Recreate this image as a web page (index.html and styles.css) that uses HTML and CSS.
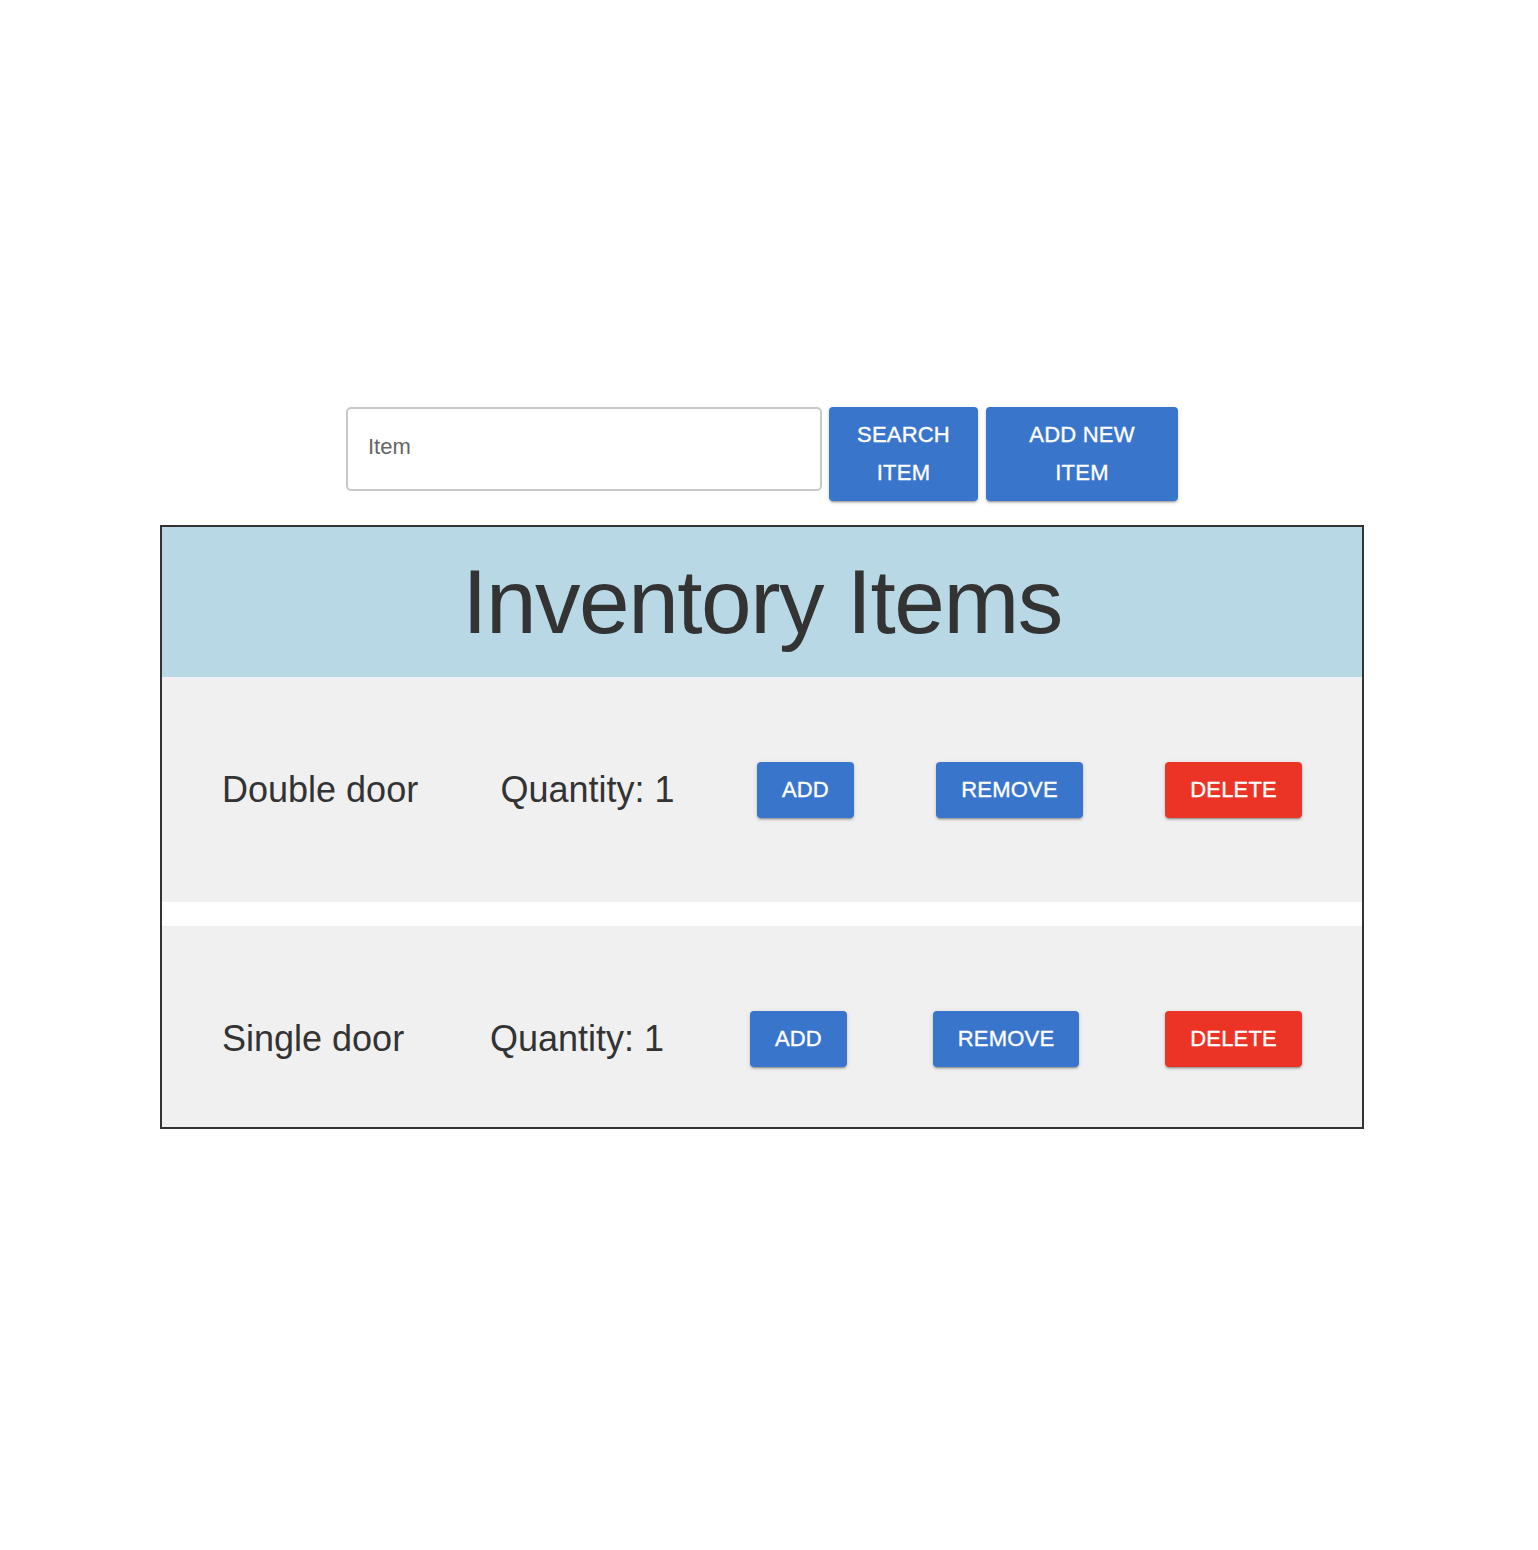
FILE: index.html
```html
<!DOCTYPE html>
<html>
<head>
<meta charset="utf-8">
<link rel="stylesheet" href="styles.css">
<title>Inventory</title>
</head>
<body>
<div class="page">
  <div class="search-row">
    <input class="search-input" type="text" placeholder="Item">
    <button class="btn btn-blue btn-search">SEARCH<br>ITEM</button>
    <button class="btn btn-blue btn-addnew">ADD NEW<br>ITEM</button>
  </div>
  <div class="inventory">
    <div class="inv-header">Inventory Items</div>
    <div class="inv-row">
      <span class="inv-name">Double door</span>
      <span class="inv-qty">Quantity: 1</span>
      <button class="btn btn-blue btn-small">ADD</button>
      <button class="btn btn-blue btn-small">REMOVE</button>
      <button class="btn btn-red btn-small">DELETE</button>
    </div>
    <div class="inv-row">
      <span class="inv-name">Single door</span>
      <span class="inv-qty">Quantity: 1</span>
      <button class="btn btn-blue btn-small">ADD</button>
      <button class="btn btn-blue btn-small">REMOVE</button>
      <button class="btn btn-red btn-small">DELETE</button>
    </div>
  </div>
</div>
</body>
</html>
```
FILE: styles.css
```css
html, body {
  margin: 0;
  padding: 0;
  background: #fff;
}
body {
  font-family: "Liberation Sans", Arial, Helvetica, sans-serif;
  color: #333;
}
.page {
  padding: 407px 0 0 0;
}
.search-row {
  display: flex;
  align-items: flex-start;
  margin-left: 346px;
  margin-bottom: 24px;
}
.search-input {
  box-sizing: border-box;
  width: 476px;
  height: 84px;
  border: 2px solid #c8c8c8;
  border-radius: 5px;
  padding: 0 20px 4px 20px;
  font-family: "Liberation Sans", Arial, sans-serif;
  font-size: 22px;
  color: #333;
  background: #fff;
  outline: none;
  margin-right: 7px;
}
.search-input::placeholder {
  color: #666;
}
.btn {
  border: none;
  border-radius: 4px;
  color: #fff;
  font-family: "Liberation Sans", Arial, sans-serif;
  font-size: 22px;
  letter-spacing: 0.2px;
  -webkit-text-stroke: 0.35px #fff;
  cursor: pointer;
  box-shadow: 0 3px 1px -2px rgba(0,0,0,0.2), 0 2px 2px 0 rgba(0,0,0,0.14), 0 1px 5px 0 rgba(0,0,0,0.12);
}
.btn-blue {
  background: #3a75cc;
}
.btn-red {
  background: #eb3425;
}
.btn-search {
  width: 149px;
  height: 94px;
  line-height: 38px;
  padding: 0;
  margin-right: 8px;
}
.btn-addnew {
  width: 192px;
  height: 94px;
  line-height: 38px;
  padding: 0;
}
.inventory {
  box-sizing: content-box;
  margin-left: 160px;
  width: 1200px;
  height: 600px;
  border: 2px solid #333;
  overflow: hidden;
}
.inv-header {
  height: 150px;
  background: #b7d8e4;
  font-size: 91px;
  letter-spacing: -1.5px;
  line-height: 150px;
  text-align: center;
  color: #333;
}
.inv-row {
  height: 225px;
  margin-bottom: 24px;
  background: #f0f0f0;
  display: flex;
  align-items: center;
  justify-content: space-between;
  padding: 0 60px;
}
.inv-name, .inv-qty {
  font-size: 36px;
  color: #333;
}
.btn-small {
  height: 56px;
  padding: 0 25px;
}
```
